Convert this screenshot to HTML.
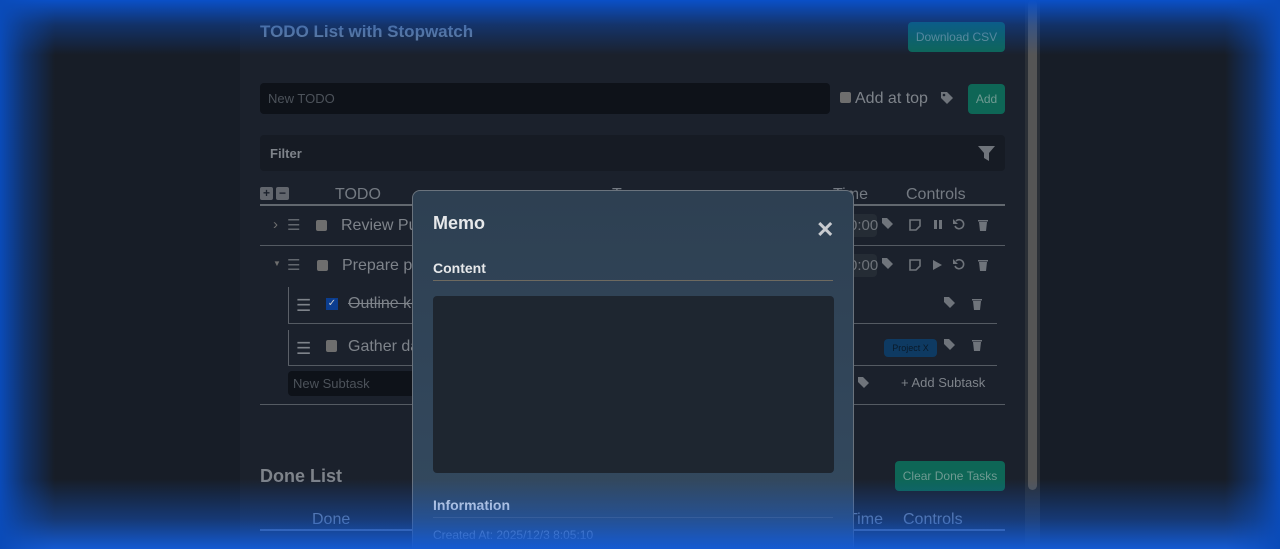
<!DOCTYPE html>
<html><head><style>
*{box-sizing:border-box;margin:0;padding:0}
html,body{width:1280px;height:549px;overflow:hidden}
body{background:#171d27;font-family:"Liberation Sans",sans-serif;position:relative;color:#8a9099}
.cont{position:absolute;left:240px;top:0;width:785px;height:549px;background:#1b212c}
.sb{position:absolute;left:1025px;top:0;width:15px;height:549px;background:#2a2f36}
.sb i{position:absolute;left:3px;top:0;width:9px;height:490px;background:#555;border-radius:5px}
.a{position:absolute;white-space:nowrap}
.btn{position:absolute;background:#0e6656;color:#6f9a92;border-radius:4px;font-size:12px;display:flex;align-items:center;justify-content:center}
.line{position:absolute;height:1px;background:#555b63}
.glow{position:absolute;inset:0;pointer-events:none;
background:linear-gradient(90deg,rgba(10,75,185,1) 0px,rgba(10,75,185,.45) 25px,rgba(10,75,185,0) 55px),
linear-gradient(270deg,rgba(10,75,185,1) 0px,rgba(10,75,185,.45) 25px,rgba(10,75,185,0) 55px),
linear-gradient(180deg,rgba(10,80,200,1) 0px,rgba(10,80,200,.4) 25px,rgba(10,80,200,0) 55px),
linear-gradient(0deg,rgba(20,90,210,1) 0px,rgba(20,90,210,.45) 30px,rgba(20,90,210,0) 70px)}
.modal{position:absolute;left:412px;top:190px;width:442px;height:370px;background:linear-gradient(#2e4052,#344a60);border:1px solid #6a737d;border-radius:8px}
.ic{fill:#6f747b}
</style></head><body>
<div class="cont"></div>
<div class="sb"><i></i></div>
<div class="a" style="left:260px;top:22px;font-size:17px;font-weight:bold;color:#6f8398">TODO List with Stopwatch</div>
<div class="btn" style="left:908px;top:22px;width:97px;height:30px">Download CSV</div>
<div class="a" style="left:260px;top:83px;width:570px;height:31px;background:#0e1219;border-radius:4px;font-size:13px;color:#4c525a;padding:8px">New TODO</div>
<div class="a" style="left:840px;top:92px;width:11px;height:11px;background:#6e6e6e;border-radius:2px"></div>
<div class="a" style="left:855px;top:90px;font-size:16px;color:#7e838a">Add at top</div>
<svg class="a" style="left:940px;top:91px" width="14" height="14" viewBox="0 0 14 14"><path class="ic" d="M1 1h6l6 6-6 6-6-6z"/><circle cx="4" cy="4" r="1.3" fill="#1b212c"/></svg>
<div class="btn" style="left:968px;top:84px;width:37px;height:30px">Add</div>
<div class="a" style="left:260px;top:135px;width:745px;height:36px;background:#161b24;border-radius:4px"></div>
<div class="a" style="left:270px;top:146px;font-size:13px;font-weight:bold;color:#7e838a">Filter</div>
<svg class="a" style="left:978px;top:146px" width="17" height="15"><path class="ic" d="M0 0h17l-6 7v8l-5-3V7z"/></svg>
<div class="a" style="left:260px;top:187px;width:13px;height:13px;background:#62666d;border-radius:2px;color:#1b212c;font-size:12px;line-height:13px;text-align:center;font-weight:bold">+</div>
<div class="a" style="left:276px;top:187px;width:13px;height:13px;background:#62666d;border-radius:2px;color:#1b212c;font-size:12px;line-height:12px;text-align:center;font-weight:bold">−</div>
<div class="a" style="left:335px;top:186px;font-size:16px;color:#747a82">TODO</div>
<div class="a" style="left:612px;top:186px;font-size:16px;color:#747a82">Tags</div>
<div class="a" style="left:833px;top:186px;font-size:16px;color:#747a82">Time</div>
<div class="a" style="left:906px;top:186px;font-size:16px;color:#747a82">Controls</div>
<div class="line" style="left:260px;top:204px;width:745px;height:2px;background:#62686f"></div>
<div class="a" style="left:273px;top:216px;font-size:15px;color:#6f6f6f">›</div>
<div class="a" style="left:287px;top:216px;font-size:15px;color:#62676e">☰</div>
<div class="a" style="left:316px;top:220px;width:11px;height:11px;background:#6e6e6e;border-radius:2px"></div>
<div class="a" style="left:341px;top:217px;font-size:16px;color:#7e838a">Review Pull Requests</div>
<div class="line" style="left:260px;top:245px;width:745px"></div>
<div class="a" style="left:273px;top:259px;font-size:8px;color:#6f6f6f">▼</div>
<div class="a" style="left:287px;top:256px;font-size:15px;color:#62676e">☰</div>
<div class="a" style="left:317px;top:260px;width:11px;height:11px;background:#6e6e6e;border-radius:2px"></div>
<div class="a" style="left:342px;top:257px;font-size:16px;color:#7e838a">Prepare presentation</div>
<div class="a" style="left:845px;top:214px;width:32px;height:23px;background:#252c35;border-radius:4px;font-size:15px;padding:3px 0 0 4px;color:#6e737a">0:00</div>
<div class="a" style="left:845px;top:254px;width:32px;height:23px;background:#252c35;border-radius:4px;font-size:15px;padding:3px 0 0 4px;color:#6e737a">0:00</div>
<svg class="a" style="left:880px;top:216px" width="120" height="60">
<g class="ic"><path d="M2 2h5l6 6-5 5-6-6z"/><path d="M2 42h5l6 6-5 5-6-6z"/>
<path d="M30 4h10v6l-4 4h-6z" fill="none" stroke="#6f747b" stroke-width="1.6"/><path d="M30 44h10v6l-4 4h-6z" fill="none" stroke="#6f747b" stroke-width="1.6"/>
<rect x="54" y="4" width="3" height="9"/><rect x="59" y="4" width="3" height="9"/><path d="M53 44l9 5-9 5z"/>
<path d="M76 5a4.5 4.5 0 1 1-1 5" fill="none" stroke="#6f747b" stroke-width="1.6"/><path d="M73 3v5h5z"/>
<path d="M76 45a4.5 4.5 0 1 1-1 5" fill="none" stroke="#6f747b" stroke-width="1.6"/><path d="M73 43v5h5z"/>
<path d="M98 4h10v1.5H98zM99 6h8l-1 9h-6z"/><path d="M98 44h10v1.5H98zM99 46h8l-1 9h-6z"/></g></svg>
<div class="a" style="left:288px;top:287px;width:1px;height:36px;background:#5b6068"></div>
<div class="a" style="left:288px;top:330px;width:1px;height:36px;background:#5b6068"></div>
<div class="a" style="left:296px;top:296px;font-size:17px;color:#7e838a">☰</div>
<div class="a" style="left:296px;top:339px;font-size:17px;color:#7e838a">☰</div>
<div class="a" style="left:326px;top:298px;width:12px;height:12px;background:#0b3d8f;color:#ccc;font-size:10px;text-align:center;line-height:12px">✓</div>
<div class="a" style="left:326px;top:340px;width:11px;height:12px;background:#6e6e6e;border-radius:2px"></div>
<div class="a" style="left:348px;top:295px;font-size:16px;color:#7e838a;text-decoration:line-through">Outline key points</div>
<div class="a" style="left:348px;top:338px;font-size:16px;color:#7e838a">Gather data</div>
<div class="line" style="left:288px;top:323px;width:709px"></div>
<div class="line" style="left:288px;top:365px;width:709px"></div>
<svg class="a" style="left:943px;top:296px" width="45" height="60"><g class="ic"><path d="M1 1h5l6 6-5 5-6-6z"/><path d="M1 43h5l6 6-5 5-6-6z"/><path d="M29 3h10v1.5H29zM30 5h8l-1 9h-6z"/><path d="M29 44h10v1.5H29zM30 46h8l-1 9h-6z"/></g></svg>
<div class="a" style="left:884px;top:339px;width:53px;height:18px;background:#0e3a62;color:#0a1a2a;border-radius:4px;font-size:9px;text-align:center;line-height:18px">Project X</div>
<div class="a" style="left:288px;top:371px;width:140px;height:25px;background:#0e1219;border-radius:4px;font-size:13px;color:#4c525a;padding:5px">New Subtask</div>
<svg class="a" style="left:857px;top:376px" width="14" height="14"><path class="ic" d="M1 1h5l6 6-5 5-6-6z"/></svg>
<div class="a" style="left:901px;top:375px;font-size:13px;color:#7e838a">+ Add Subtask</div>
<div class="line" style="left:260px;top:404px;width:745px"></div>
<div class="a" style="left:260px;top:466px;font-size:18px;font-weight:bold;color:#7e838a">Done List</div>
<div class="btn" style="left:895px;top:461px;width:110px;height:30px">Clear Done Tasks</div>
<div class="a" style="left:312px;top:511px;font-size:16px;color:#7a8aa0">Done</div>
<div class="a" style="left:848px;top:511px;font-size:16px;color:#7a8aa0">Time</div>
<div class="a" style="left:903px;top:511px;font-size:16px;color:#7a8aa0">Controls</div>
<div class="line" style="left:260px;top:529px;width:745px;height:2px;background:#6a7890"></div>
<div class="modal">
<div class="a" style="left:20px;top:22px;font-size:18px;font-weight:bold;color:#e6e8ea">Memo</div>
<div class="a" style="left:403px;top:26px;font-size:22px;font-weight:bold;color:#c8cbd0">✕</div>
<div class="a" style="left:20px;top:69px;font-size:14px;font-weight:bold;color:#e6e8ea">Content</div>
<div class="a" style="left:20px;top:89px;width:400px;height:1px;background:#6e6a60"></div>
<div class="a" style="left:20px;top:105px;width:401px;height:177px;background:#1e2630;border-radius:4px"></div>
<div class="a" style="left:20px;top:306px;font-size:14px;font-weight:bold;color:#e6e8ea">Information</div>
<div class="a" style="left:20px;top:326px;width:400px;height:1px;background:#506070"></div>
<div class="a" style="left:20px;top:337px;font-size:12px;color:#9fb0c4">Created At: 2025/12/3 8:05:10</div>
</div>
<div class="glow"></div>
</body></html>
